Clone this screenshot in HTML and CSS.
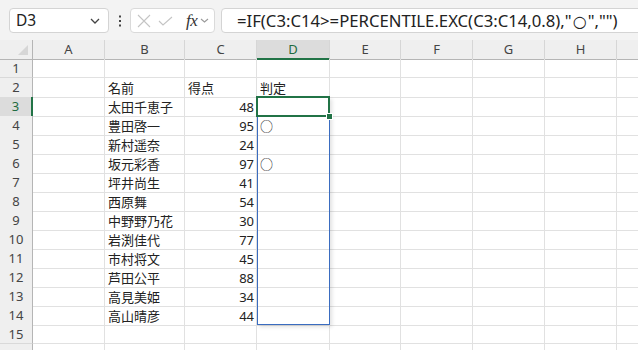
FILE: index.html
```html
<!DOCTYPE html>
<html lang="ja">
<head>
<meta charset="utf-8">
<title>Excel</title>
<link rel="stylesheet" href="styles.css">
</head>
<body>
<div class="toolbar">
  <div class="namebox">
    <span class="ref">D3</span>
    <svg class="chev" width="10" height="6" viewBox="0 0 10 6"><polyline points="1,1 5,5 9,1" fill="none" stroke="#444" stroke-width="1.3"/></svg>
  </div>
  <div class="dots">
    <svg width="4" height="12" viewBox="0 0 4 12"><rect x="1" y="0.5" width="2" height="2" fill="#444"/><rect x="1" y="5" width="2" height="2" fill="#444"/><rect x="1" y="9.5" width="2" height="2" fill="#444"/></svg>
  </div>
  <div class="fbtns">
    <svg class="ic-x" width="14" height="14" viewBox="0 0 14 14"><path d="M1 1 L13 13 M13 1 L1 13" stroke="#c4c4c4" stroke-width="1.1" fill="none"/></svg>
    <svg class="ic-ok" width="15" height="10" viewBox="0 0 15 10"><polyline points="1,5 5,9 14,1" fill="none" stroke="#c4c4c4" stroke-width="1.1"/></svg>
    <span class="fx">fx</span>
    <svg class="chev2" width="9" height="5" viewBox="0 0 9 5"><polyline points="1,1 4.5,4 8,1" fill="none" stroke="#9a9a9a" stroke-width="1.1"/></svg>
  </div>
  <div class="formula">=IF(C3:C14&gt;=PERCENTILE.EXC(C3:C14,0.8),"<span class="circ">○</span>","")</div>
</div>

<div class="sheet">
  <div class="row head">
    <div class="corner"><span class="tri"></span></div>
    <div class="ch">A</div><div class="ch">B</div><div class="ch">C</div><div class="ch sel-ch">D</div><div class="ch">E</div><div class="ch">F</div><div class="ch">G</div><div class="ch">H</div><div class="ch"></div>
  </div>
  <div class="row"><div class="rh">1</div><div class="c"></div><div class="c"></div><div class="c"></div><div class="c"></div><div class="c"></div><div class="c"></div><div class="c"></div><div class="c"></div><div class="c"></div></div>
  <div class="row"><div class="rh">2</div><div class="c"></div><div class="c t">名前</div><div class="c t">得点</div><div class="c t">判定</div><div class="c"></div><div class="c"></div><div class="c"></div><div class="c"></div><div class="c"></div></div>
  <div class="row"><div class="rh sel-rh">3</div><div class="c"></div><div class="c t">太田千恵子</div><div class="c n">48</div><div class="c"></div><div class="c"></div><div class="c"></div><div class="c"></div><div class="c"></div><div class="c"></div></div>
  <div class="row"><div class="rh">4</div><div class="c"></div><div class="c t">豊田啓一</div><div class="c n">95</div><div class="c t">○</div><div class="c"></div><div class="c"></div><div class="c"></div><div class="c"></div><div class="c"></div></div>
  <div class="row"><div class="rh">5</div><div class="c"></div><div class="c t">新村遥奈</div><div class="c n">24</div><div class="c"></div><div class="c"></div><div class="c"></div><div class="c"></div><div class="c"></div><div class="c"></div></div>
  <div class="row"><div class="rh">6</div><div class="c"></div><div class="c t">坂元彩香</div><div class="c n">97</div><div class="c t">○</div><div class="c"></div><div class="c"></div><div class="c"></div><div class="c"></div><div class="c"></div></div>
  <div class="row"><div class="rh">7</div><div class="c"></div><div class="c t">坪井尚生</div><div class="c n">41</div><div class="c"></div><div class="c"></div><div class="c"></div><div class="c"></div><div class="c"></div><div class="c"></div></div>
  <div class="row"><div class="rh">8</div><div class="c"></div><div class="c t">西原舞</div><div class="c n">54</div><div class="c"></div><div class="c"></div><div class="c"></div><div class="c"></div><div class="c"></div><div class="c"></div></div>
  <div class="row"><div class="rh">9</div><div class="c"></div><div class="c t">中野野乃花</div><div class="c n">30</div><div class="c"></div><div class="c"></div><div class="c"></div><div class="c"></div><div class="c"></div><div class="c"></div></div>
  <div class="row"><div class="rh">10</div><div class="c"></div><div class="c t">岩渕佳代</div><div class="c n">77</div><div class="c"></div><div class="c"></div><div class="c"></div><div class="c"></div><div class="c"></div><div class="c"></div></div>
  <div class="row"><div class="rh">11</div><div class="c"></div><div class="c t">市村将文</div><div class="c n">45</div><div class="c"></div><div class="c"></div><div class="c"></div><div class="c"></div><div class="c"></div><div class="c"></div></div>
  <div class="row"><div class="rh">12</div><div class="c"></div><div class="c t">芦田公平</div><div class="c n">88</div><div class="c"></div><div class="c"></div><div class="c"></div><div class="c"></div><div class="c"></div><div class="c"></div></div>
  <div class="row"><div class="rh">13</div><div class="c"></div><div class="c t">高見美姫</div><div class="c n">34</div><div class="c"></div><div class="c"></div><div class="c"></div><div class="c"></div><div class="c"></div><div class="c"></div></div>
  <div class="row"><div class="rh">14</div><div class="c"></div><div class="c t">高山晴彦</div><div class="c n">44</div><div class="c"></div><div class="c"></div><div class="c"></div><div class="c"></div><div class="c"></div><div class="c"></div></div>
  <div class="row"><div class="rh">15</div><div class="c"></div><div class="c"></div><div class="c"></div><div class="c"></div><div class="c"></div><div class="c"></div><div class="c"></div><div class="c"></div><div class="c"></div></div>
  <div class="row"><div class="rh"></div><div class="c"></div><div class="c"></div><div class="c"></div><div class="c"></div><div class="c"></div><div class="c"></div><div class="c"></div><div class="c"></div><div class="c"></div></div>

  <div class="range-outline"></div>
  <div class="active-cell"><span class="handle"></span></div>
</div>
</body>
</html>
```

FILE: styles.css
```css
* { box-sizing: border-box; }

html, body {
  margin: 0;
  padding: 0;
  width: 638px;
  height: 350px;
  overflow: hidden;
  background: #ffffff;
  font-family: "Noto Sans", "Noto Sans CJK JP", sans-serif;
  color: #222;
}

/* ---------- formula bar ---------- */
.toolbar {
  height: 40px;
  background: #f3f3f3;
  display: flex;
  align-items: flex-start;
  padding: 8px 0 0 9px;
  overflow: hidden;
}

.namebox {
  flex: none;
  width: 100px;
  height: 25px;
  background: #fff;
  border: 1px solid #d4d4d4;
  border-radius: 4px;
  display: flex;
  align-items: center;
  justify-content: space-between;
  padding: 0 8px 0 6px;
}

.ref {
  font-size: 15.5px;
  color: #222;
  line-height: 1;
}

.dots {
  flex: none;
  width: 21px;
  height: 25px;
  display: flex;
  align-items: center;
  justify-content: center;
}

.fbtns {
  flex: none;
  width: 85px;
  height: 25px;
  background: #fff;
  border: 1px solid #dadada;
  border-radius: 4px;
  display: flex;
  align-items: center;
  padding-left: 6px;
}

.ic-x { margin-right: 7px; }
.ic-ok { margin-right: 13px; margin-top: 1px; }

.fx {
  font-family: "Liberation Serif", "DejaVu Serif", serif;
  font-style: italic;
  font-size: 17px;
  color: #333;
  line-height: 1;
  margin-right: 3px;
  letter-spacing: -0.5px;
}

.formula {
  flex: none;
  width: 480px;
  height: 25px;
  margin-left: 6px;
  background: #fff;
  border: 1px solid #d4d4d4;
  border-radius: 4px;
  padding-left: 15px;
  font-size: 16.7px;
  line-height: 23px;
  color: #222;
  white-space: nowrap;
}

.circ {
  font-family: "DejaVu Sans", sans-serif;
  font-size: 16px;
  margin: 0 1px;
}

/* ---------- sheet ---------- */
.sheet {
  position: relative;
}

.row {
  display: grid;
  grid-template-columns: 33px 72px 80px 72px 73px 71px 72px 72px 72px 60px;
  height: 19px;
}

.c {
  border-right: 1px solid #e1e1e1;
  border-bottom: 1px solid #e1e1e1;
  font-size: 13px;
  line-height: 18px;
  padding-top: 1px;
  white-space: nowrap;
  overflow: visible;
}

.t { padding-left: 3px; }
.n { text-align: right; padding-right: 2px; }

.head { background: #efefef; }

.corner {
  position: relative;
  background: #efefef;
  border-right: 1px solid #b5b5b5;
  border-bottom: 1px solid #b5b5b5;
}

.tri {
  position: absolute;
  right: 4px;
  bottom: 4px;
  width: 0;
  height: 0;
  border-left: 10px solid transparent;
  border-bottom: 10px solid #d6d6d6;
}

.ch {
  background: #efefef;
  border-right: 1px solid #d6d6d6;
  border-bottom: 1px solid #b5b5b5;
  text-align: center;
  font-size: 13px;
  line-height: 18px;
  color: #444;
}

.sel-ch {
  background: #dcdcdc;
  border-bottom: 2px solid #217346;
  color: #1e6b40;
}

.rh {
  background: #efefef;
  border-right: 1px solid #b5b5b5;
  border-bottom: 1px solid #d9d9d9;
  text-align: center;
  font-size: 13px;
  line-height: 18px;
  color: #444;
}

.sel-rh {
  background: #dcdcdc;
  border-right: 2px solid #217346;
  color: #1e6b40;
}

/* ---------- selection overlays ---------- */
.range-outline {
  position: absolute;
  left: 257px;
  top: 57px;
  width: 73px;
  height: 228px;
  border: 1px solid #3a6cc0;
  box-shadow: 2px 2px 4px rgba(0, 0, 0, 0.12);
}

.active-cell {
  position: absolute;
  left: 256px;
  top: 56px;
  width: 74px;
  height: 21px;
  border: 2px solid #217346;
}

.handle {
  position: absolute;
  right: -5px;
  bottom: -5px;
  width: 7px;
  height: 7px;
  background: #217346;
  border: 1px solid #fff;
}
```
